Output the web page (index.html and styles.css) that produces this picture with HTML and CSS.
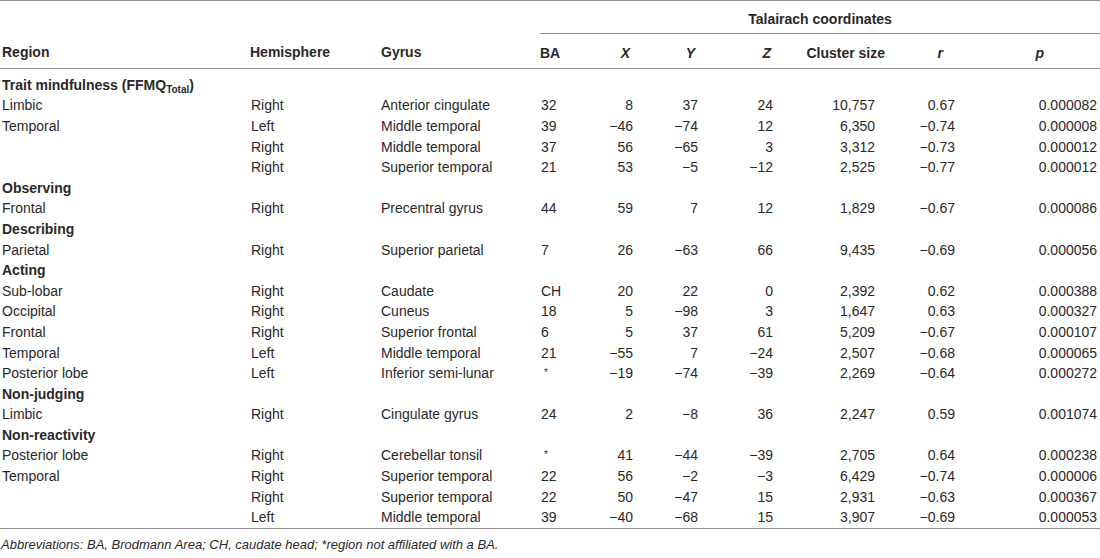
FILE: index.html
```html
<!DOCTYPE html>
<html>
<head>
<meta charset="utf-8">
<link rel="stylesheet" href="styles.css">
</head>
<body>
<table class="tbl">
<colgroup>
<col class="c-region"><col class="c-hemi"><col class="c-gyrus"><col class="c-ba"><col class="c-x"><col class="c-y"><col class="c-z"><col class="c-cl"><col class="c-r"><col class="c-p">
</colgroup>
<thead>
<tr class="h1">
<th colspan="3"></th>
<th colspan="7" class="tal">Talairach coordinates</th>
</tr>
<tr class="h2">
<th class="l first">Region</th>
<th class="l">Hemisphere</th>
<th class="l">Gyrus</th>
<th class="l ba">BA</th>
<th class="hx"><i>X</i></th>
<th class="hy"><i>Y</i></th>
<th class="hz"><i>Z</i></th>
<th class="hcl">Cluster size</th>
<th class="hr"><i>r</i></th>
<th class="hp"><i>p</i></th>
</tr>
</thead>
<tbody>
<tr class="sec first-sec"><td colspan="10">Trait mindfulness (FFMQ<sub>Total</sub>)</td></tr>
<tr><td>Limbic</td><td>Right</td><td>Anterior cingulate</td><td>32</td><td>8</td><td>37</td><td>24</td><td>10,757</td><td>0.67</td><td>0.000082</td></tr>
<tr><td>Temporal</td><td>Left</td><td>Middle temporal</td><td>39</td><td>−46</td><td>−74</td><td>12</td><td>6,350</td><td>−0.74</td><td>0.000008</td></tr>
<tr><td></td><td>Right</td><td>Middle temporal</td><td>37</td><td>56</td><td>−65</td><td>3</td><td>3,312</td><td>−0.73</td><td>0.000012</td></tr>
<tr><td></td><td>Right</td><td>Superior temporal</td><td>21</td><td>53</td><td>−5</td><td>−12</td><td>2,525</td><td>−0.77</td><td>0.000012</td></tr>
<tr class="sec"><td colspan="10">Observing</td></tr>
<tr><td>Frontal</td><td>Right</td><td>Precentral gyrus</td><td>44</td><td>59</td><td>7</td><td>12</td><td>1,829</td><td>−0.67</td><td>0.000086</td></tr>
<tr class="sec"><td colspan="10">Describing</td></tr>
<tr><td>Parietal</td><td>Right</td><td>Superior parietal</td><td>7</td><td>26</td><td>−63</td><td>66</td><td>9,435</td><td>−0.69</td><td>0.000056</td></tr>
<tr class="sec"><td colspan="10">Acting</td></tr>
<tr><td>Sub-lobar</td><td>Right</td><td>Caudate</td><td>CH</td><td>20</td><td>22</td><td>0</td><td>2,392</td><td>0.62</td><td>0.000388</td></tr>
<tr><td>Occipital</td><td>Right</td><td>Cuneus</td><td>18</td><td>5</td><td>−98</td><td>3</td><td>1,647</td><td>0.63</td><td>0.000327</td></tr>
<tr><td>Frontal</td><td>Right</td><td>Superior frontal</td><td>6</td><td>5</td><td>37</td><td>61</td><td>5,209</td><td>−0.67</td><td>0.000107</td></tr>
<tr><td>Temporal</td><td>Left</td><td>Middle temporal</td><td>21</td><td>−55</td><td>7</td><td>−24</td><td>2,507</td><td>−0.68</td><td>0.000065</td></tr>
<tr><td>Posterior lobe</td><td>Left</td><td>Inferior semi-lunar</td><td><span class="ast">*</span></td><td>−19</td><td>−74</td><td>−39</td><td>2,269</td><td>−0.64</td><td>0.000272</td></tr>
<tr class="sec"><td colspan="10">Non-judging</td></tr>
<tr><td>Limbic</td><td>Right</td><td>Cingulate gyrus</td><td>24</td><td>2</td><td>−8</td><td>36</td><td>2,247</td><td>0.59</td><td>0.001074</td></tr>
<tr class="sec"><td colspan="10">Non-reactivity</td></tr>
<tr><td>Posterior lobe</td><td>Right</td><td>Cerebellar tonsil</td><td><span class="ast">*</span></td><td>41</td><td>−44</td><td>−39</td><td>2,705</td><td>0.64</td><td>0.000238</td></tr>
<tr><td>Temporal</td><td>Right</td><td>Superior temporal</td><td>22</td><td>56</td><td>−2</td><td>−3</td><td>6,429</td><td>−0.74</td><td>0.000006</td></tr>
<tr><td></td><td>Right</td><td>Superior temporal</td><td>22</td><td>50</td><td>−47</td><td>15</td><td>2,931</td><td>−0.63</td><td>0.000367</td></tr>
<tr class="last"><td></td><td>Left</td><td>Middle temporal</td><td>39</td><td>−40</td><td>−68</td><td>15</td><td>3,907</td><td>−0.69</td><td>0.000053</td></tr>
</tbody>
</table>
<p class="note">Abbreviations: BA, Brodmann Area; CH, caudate head; *region not affiliated with a BA.</p>
</body>
</html>
```

FILE: styles.css
```css
html, body {
  margin: 0;
  padding: 0;
  background: #ffffff;
}
body {
  font-family: "Liberation Sans", Arial, sans-serif;
  font-size: 14px;
  color: #2b2829;
  width: 1100px;
}
.tbl {
  width: 1100px;
  table-layout: fixed;
  border-collapse: collapse;
  border-top: 1px solid #8c8c8c;
}
.c-region { width: 250px; }
.c-hemi { width: 131px; }
.c-gyrus { width: 159px; }
.c-ba { width: 60px; }
.c-x { width: 40px; }
.c-y { width: 72px; }
.c-z { width: 73px; }
.c-cl { width: 106px; }
.c-r { width: 111px; }
.c-p { width: 98px; }

th, td {
  padding: 0;
  white-space: nowrap;
  line-height: 16px;
}
th {
  font-weight: bold;
}
th i, td i { font-style: italic; }

.h1 th {
  height: 29px;
  vertical-align: middle;
  padding-top: 3px;
}
.tal {
  text-align: center;
  border-bottom: 1px solid #8c8c8c;
}
.h2 th {
  height: 31px;
  vertical-align: middle;
  padding-top: 3px;
  border-bottom: 1px solid #8c8c8c;
  text-align: right;
}
.h2 th.l { text-align: left; }
.h2 th.first { padding-left: 2px; }
.h2 .hx { padding-right: 10px; }
.h2 .hy { padding-right: 17px; }
.h2 .hz { padding-right: 14px; }
.h2 .hcl { padding-right: 6px; }
.h2 .hr { padding-right: 59px; }
.h2 .hp { padding-right: 56px; }

tbody td {
  height: 20.6px;
  vertical-align: middle;
  text-align: right;
}
tbody td:nth-child(1) { text-align: left; padding-left: 2px; }
tbody td:nth-child(2) { text-align: left; padding-left: 1px; }
tbody td:nth-child(3) { text-align: left; padding-left: 0; }
tbody td:nth-child(4) { text-align: left; padding-left: 1px; }
tbody td:nth-child(5) { padding-right: 7px; }
tbody td:nth-child(6) { padding-right: 14px; }
tbody td:nth-child(7) { padding-right: 12px; }
tbody td:nth-child(8) { padding-right: 16px; }
tbody td:nth-child(9) { padding-right: 47px; }
tbody td:nth-child(10) { padding-right: 3px; }

tbody tr.sec td {
  font-weight: bold;
  text-align: left;
  padding-left: 2px;
}
tbody tr.first-sec td {
  padding-top: 5.5px;
}
sub {
  font-size: 10px;
  vertical-align: -3px;
  line-height: 0;
}
.ast {
  font-size: 10px;
  vertical-align: 3px;
  padding-left: 3px;
}
tbody tr.last td {
  border-bottom: 1px solid #8c8c8c;
  padding-bottom: 0;
}
.note {
  margin: 8px 0 0 1px;
  font-style: italic;
  font-size: 13px;
  line-height: 16px;
}
```
